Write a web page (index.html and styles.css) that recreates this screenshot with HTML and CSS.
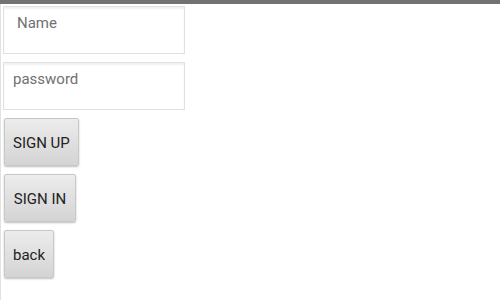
FILE: index.html
```html
<!DOCTYPE html>
<html>
<head>
<meta charset="utf-8">
<link rel="stylesheet" href="styles.css">
</head>
<body>
<div class="topbar"></div>
<div class="page">
  <form class="form">
    <div class="field"><span class="ph ph-name">Name</span></div>
    <div class="field"><span class="ph">password</span></div>
    <button type="button" class="btn btn-auth">SIGN UP</button>
    <button type="button" class="btn btn-auth">SIGN IN</button>
    <button type="button" class="btn">back</button>
  </form>
</div>
</body>
</html>
```
FILE: styles.css
```css
html, body {
  margin: 0;
  padding: 0;
  background: #ffffff;
  font-family: Roboto, "Liberation Sans", sans-serif;
}
.topbar {
  height: 4px;
  background: #727272;
}
.page {
  border-left: 1px solid #e2e2e2;
  height: 296px;
  box-sizing: border-box;
}
.form {
  display: flex;
  flex-direction: column;
  align-items: flex-start;
  gap: 8px;
  padding: 2px 0 0 2px;
}
.field {
  width: 180px;
  height: 46px;
  border: 1px solid #e0e0e0;
  box-shadow: inset 0 2px 2px rgba(0,0,0,0.06);
  background: #fff;
  box-sizing: content-box;
  padding: 0;
  position: relative;
}
.ph {
  display: block;
  color: #707070;
  font-size: 15px;
  padding: 8px 0 0 9px;
  line-height: 17px;
}
.ph-name {
  padding-left: 13px;
}
.btn {
  margin-left: 1px;
  height: 48px;
  padding: 1px 8px 0;
  border: 1px solid #c8c8c8;
  border-radius: 2px;
  background: linear-gradient(#ececec, #d4d4d4);
  box-shadow: 0 1px 2px rgba(0,0,0,0.25);
  font-family: Roboto, "Liberation Sans", sans-serif;
  font-size: 15px;
  color: #222;
}
.btn-auth {
  min-width: 72px;
}
```
